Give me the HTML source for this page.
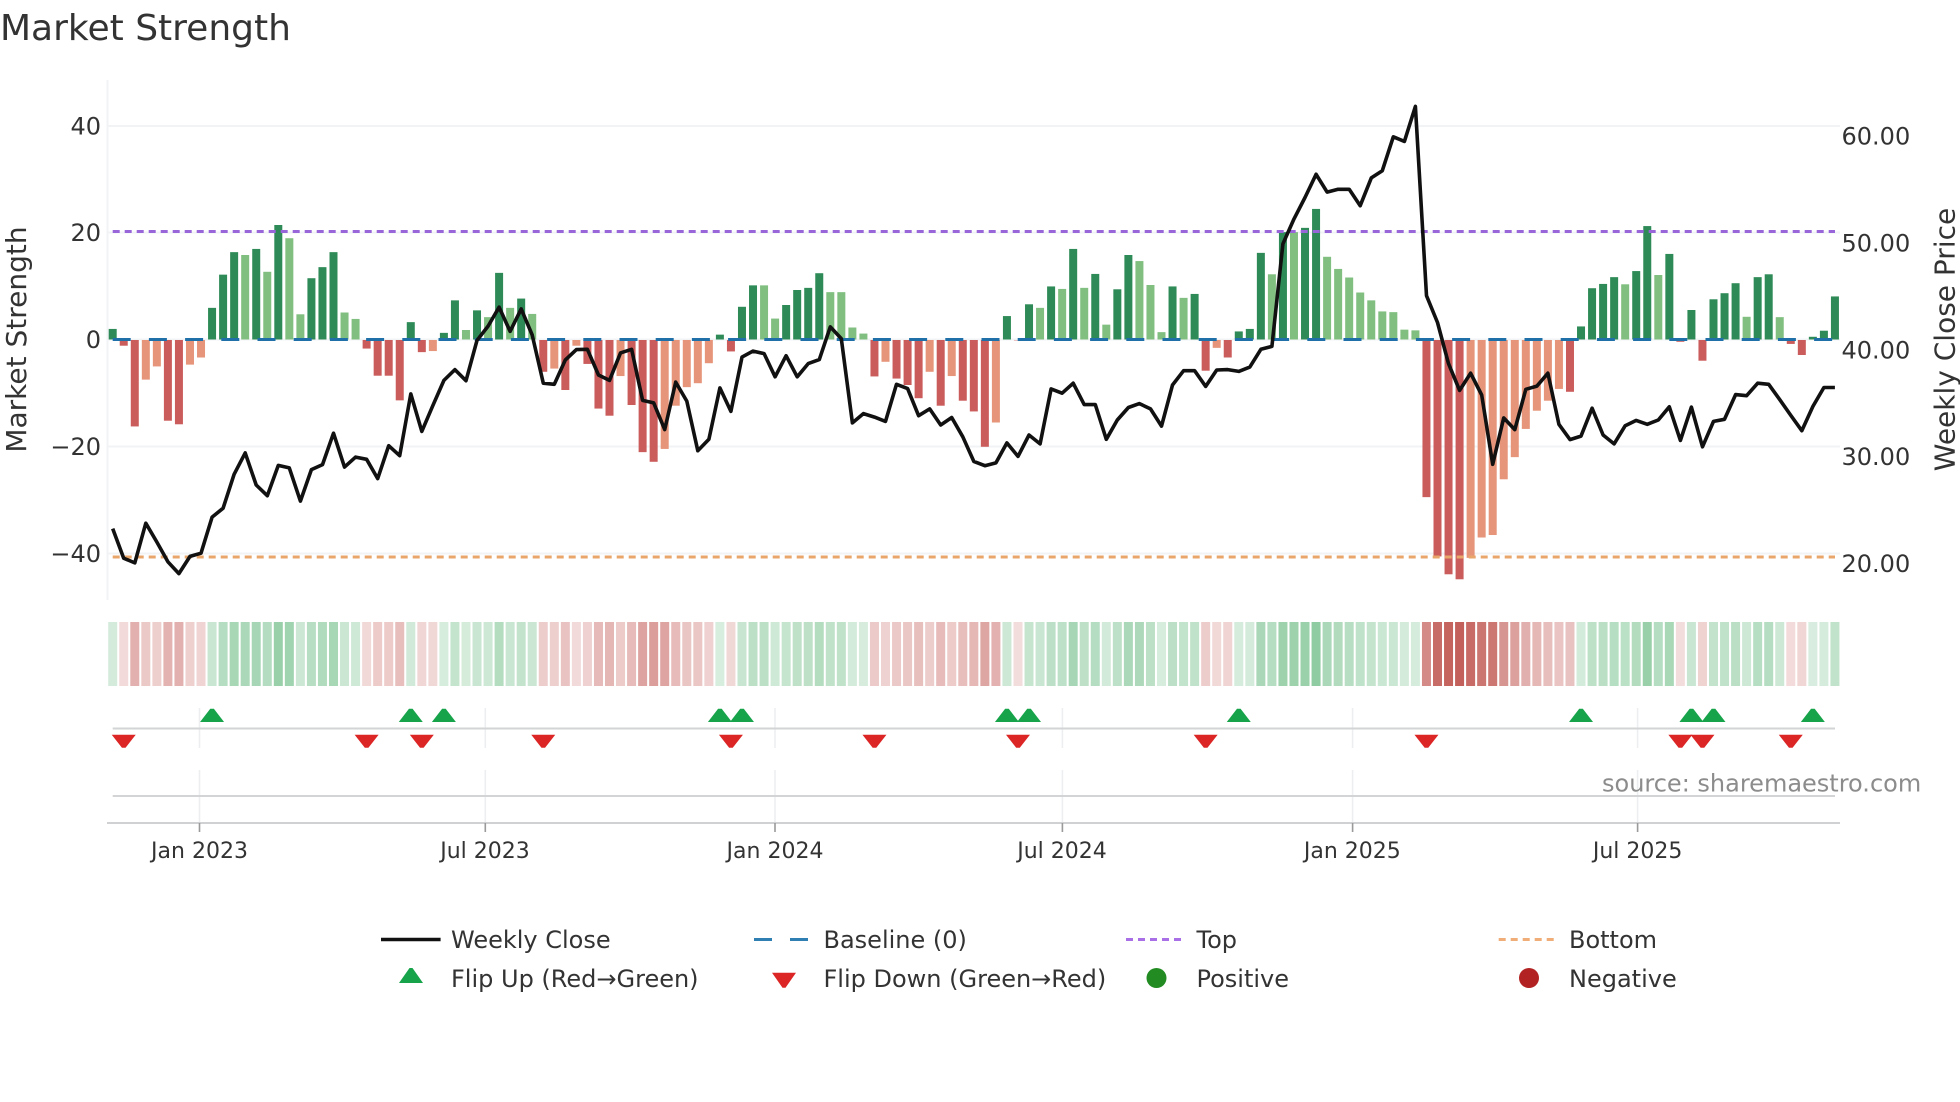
<!DOCTYPE html>
<html lang="en">
<head>
<meta charset="utf-8">
<title>Market Strength</title>
<style>
html,body{margin:0;padding:0;background:#fff;width:1960px;height:1102px;overflow:hidden}
svg{display:block}
text{font-family:"DejaVu Sans","Liberation Sans",sans-serif;fill:#333}
.t{font-size:24px}
.x{font-size:22px;text-anchor:middle}
.l{font-size:24px}
.e{text-anchor:end}
</style>
</head>
<body>
<svg id="c" xmlns="http://www.w3.org/2000/svg" width="1960" height="1102" viewBox="0 0 1960 1102">
<rect width="1960" height="1102" fill="#fff"/>
<text x="0" y="40" style="font-size:36px">Market Strength</text>

<g stroke="#f1f3f5" stroke-width="2" fill="none">
<path d="M107.5 80V600"/>
<path d="M107 126H1840M107 232.5H1840M107 339.5H1840M107 446.5H1840M107 553.5H1840"/>
</g>

<text class="t e" x="101" y="134.7">40</text>
<text class="t e" x="101" y="240.8">20</text>
<text class="t e" x="101" y="348">0</text>
<text class="t e" x="101" y="455">−20</text>
<text class="t e" x="101" y="562">−40</text>
<text class="t" x="1841.5" y="144.7">60.00</text>
<text class="t" x="1841.5" y="251.5">50.00</text>
<text class="t" x="1841.5" y="358.5">40.00</text>
<text class="t" x="1841.5" y="465">30.00</text>
<text class="t" x="1841.5" y="572">20.00</text>
<text transform="translate(26 339.5) rotate(-90)" text-anchor="middle" style="font-size:28px">Market Strength</text>
<text transform="translate(1954.3 339.5) rotate(-90)" text-anchor="middle" style="font-size:28px">Weekly Close Price</text>

<g id="bars"></g>
<g fill="none">
<path d="M112.7 339.5H1835" stroke="#1f6fa8" stroke-width="3" stroke-dasharray="18 18.2"/>
<path d="M112.7 231.5H1835" stroke="#9966d9" stroke-width="3" stroke-dasharray="7 5"/>
<path d="M112.7 557H1835" stroke="#e9a66b" stroke-width="3" stroke-dasharray="7 5"/>
</g>
<polyline id="line" fill="none" stroke="#111" stroke-width="3.6" stroke-linejoin="round" points=""/>

<g id="cells"></g>

<g stroke="#eceef0" stroke-width="1.5" fill="none">
<path d="M199.5 708V748M199.5 770V823M485.3 708V748M485.3 770V823M775 708V748M775 770V823M1062.4 708V748M1062.4 770V823M1352.6 708V748M1352.6 770V823M1637.6 708V748M1637.6 770V823"/>
</g>
<g stroke="#d2d4d6" stroke-width="2" fill="none">
<path d="M112.7 728.5H1835M112.7 796H1835"/>
<path d="M107 823H1840" stroke="#cfd1d3"/>
</g>
<g stroke="#9a9a9a" stroke-width="1.6" fill="none">
<path d="M199.5 823V832M485.3 823V832M775 823V832M1062.4 823V832M1352.6 823V832M1637.6 823V832"/>
</g>
<g id="marks"></g>

<text x="1602" y="791.7" style="font-size:24px;fill:#8c8c8c">source: sharemaestro.com</text>

<text class="x" x="199.5" y="858">Jan 2023</text>
<text class="x" x="485" y="858">Jul 2023</text>
<text class="x" x="775" y="858">Jan 2024</text>
<text class="x" x="1062" y="858">Jul 2024</text>
<text class="x" x="1352.3" y="858">Jan 2025</text>
<text class="x" x="1637.6" y="858">Jul 2025</text>

<path d="M381 939.5H440.6" stroke="#111" stroke-width="3.6"/>
<path d="M754 939.5H808" stroke="#2f7fb3" stroke-width="3" stroke-dasharray="18 18"/>
<path d="M1126 939.5H1181" stroke="#a86fe6" stroke-width="3" stroke-dasharray="7 5"/>
<path d="M1498.7 939.5H1554" stroke="#f0ad78" stroke-width="3" stroke-dasharray="7 5"/>
<polygon points="399,983 409.5,968 412.5,968 423,983" fill="#16a34a"/>
<polygon points="772,972.7 796,972.7 785.5,987.7 782.5,987.7" fill="#dc2626"/>
<circle cx="1156.5" cy="978" r="10" fill="#228b22"/>
<circle cx="1529" cy="978" r="10" fill="#b22222"/>
<text class="l" x="451" y="948">Weekly Close</text>
<text class="l" x="823.5" y="948">Baseline (0)</text>
<text class="l" x="1196.5" y="948">Top</text>
<text class="l" x="1569" y="948">Bottom</text>
<text class="l" x="451" y="987">Flip Up (Red→Green)</text>
<text class="l" x="823.5" y="987">Flip Down (Green→Red)</text>
<text class="l" x="1196.5" y="987">Positive</text>
<text class="l" x="1569" y="987">Negative</text>
</svg>
<script>
var NS="http://www.w3.org/2000/svg";
var B="G753 R800 R1026 r895 r858 R1010 R1020 r853 r833 G694 G601 G538 g546 G529 g593 G462 g499 g712 G611 G580 G538 g707 g725 R808 R884 R884 R953 G734 R818 r815 G764 G673 g756 G701 g720 G596 g694 G668 g711 R873 r864 R924 r800 R851 R976 R996 r885 R966 R1098 R1125 r1089 r968 r916 r905 r849 G769 R816 G691 G631 g631 g724 G686 G644 G638 G597 g650 g650 g749 g766 R886 r845 R892 R910 R947 r873 R968 r885 R954 R984 R1083 r1015 G717 R785 G684 g694 G634 g641 G529 g638 G599 g741 G642 G546 g563 g630 g762 G634 g666 G655 R870 r806 R833 G760 G753 G540 g600 G482 g482 G470 G417 g551 g585 g609 g651 g673 g704 g706 g755 g757 R1224 R1390 R1440 R1454 r1394 r1337 r1330 r1174 r1112 r1033 r982 r954 r921 R929 G746 G639 G627 G608 g628 G591 G465 g602 G543 R789 G700 R842 G670 G653 G625 g719 G608 G600 g720 R795 R826 G775 G758 G662".split(" ");
var L=[1312,1395,1408,1297,1350,1405,1438,1390,1381,1280,1255,1160,1100,1190,1220,1135,1142,1235,1147,1133,1045,1140,1112,1118,1172,1080,1108,935,1040,967,897,867,898,785,745,692,760,697,770,905,908,840,811,810,882,897,820,810,953,960,1035,902,955,1094,1062,918,984,832,815,822,887,828,887,850,839,747,780,1016,990,1000,1012,908,920,996,977,1022,1001,1055,1124,1136,1128,1072,1110,1050,1075,921,933,905,965,965,1062,1008,973,962,977,1025,910,870,870,914,868,867,872,860,810,802,515,445,385,320,370,362,362,408,330,310,215,228,130,660,735,850,925,877,938,1132,1002,1035,922,913,877,1020,1063,1053,975,1050,1075,1024,1009,1020,1008,971,1065,972,1083,1012,1006,937,940,905,908,951,995,1038,970,917,917];
var C={G:"#2e8b57",g:"#81bf80",R:"#cb5c5c",r:"#e6957a"};
function X(i){return 112.7+11.04*i}
function Y(z){return 60+z/2.8}
function el(n,a,p){var e=document.createElementNS(NS,n);for(var k in a)e.setAttribute(k,a[k]);p.appendChild(e);return e}
var bars=document.getElementById("bars"),cells=document.getElementById("cells"),marks=document.getElementById("marks");
var pts=[];
for(var i=0;i<B.length;i++){
  var t=B[i][0],z=+B[i].slice(1),y=Y(z),x=X(i),up=(t=="G"||t=="g");
  el("rect",{x:(x-4).toFixed(2),y:(up?y:340).toFixed(2),width:8,height:(up?339.5-y:y-340).toFixed(2),fill:C[t]},bars);
  var v=Math.abs(339.5-y)/5.345,a,c;
  if(up){a=Math.min(1,.2+.0165*v);c=[70,170,100]}else{a=Math.min(1,.19+.016*v);c=[190,80,75]}
  var m=c.map(function(q){return Math.round(255-(255-q)*a)});
  el("rect",{x:(x-4.5).toFixed(2),y:622,width:9,height:64,fill:"rgb("+m.join(",")+")"},cells);
  pts.push(x.toFixed(1)+","+Y(L[i]).toFixed(1));
}
document.getElementById("line").setAttribute("points",pts.join(" "));
[9,27,30,55,57,81,83,102,133,143,145,154].forEach(function(i){var x=X(i);
  el("polygon",{points:(x-12)+",722 "+(x-1.8)+",708.7 "+(x+1.8)+",708.7 "+(x+12)+",722",fill:"#16a34a"},marks)});
[1,23,28,39,56,69,82,99,119,142,144,152].forEach(function(i){var x=X(i);
  el("polygon",{points:(x-12)+",734.7 "+(x+12)+",734.7 "+(x+1.8)+",747.7 "+(x-1.8)+",747.7",fill:"#dc2626"},marks)});
</script>
</body>
</html>
